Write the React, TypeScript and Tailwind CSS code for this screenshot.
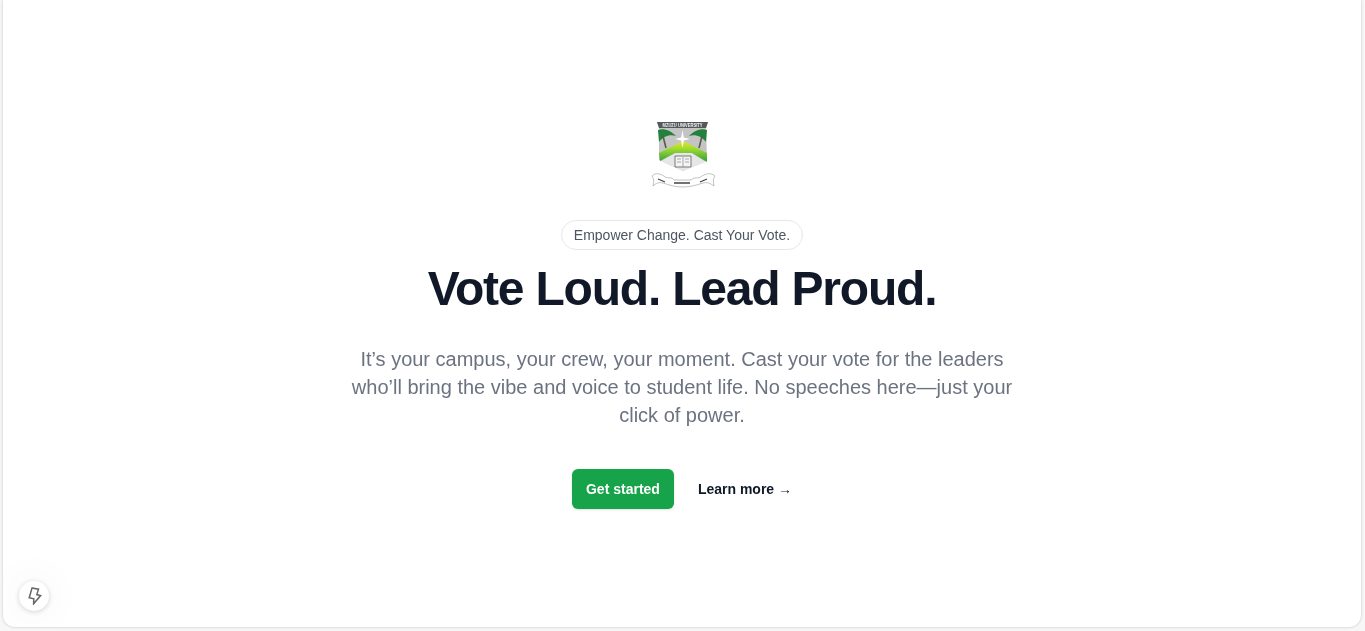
export default function App() {
  return (
    <div className="h-[631px] w-full overflow-hidden bg-[#f7f7f7] pl-[3px] pr-1 pb-1 font-['Liberation_Sans',Arial,sans-serif]">
      <div className="relative flex h-[627px] flex-col items-center overflow-hidden rounded-b-xl bg-white pt-[120px] shadow-[0_0_3px_rgba(0,0,0,0.22)] [will-change:transform]">
        <svg width="68" height="68" viewBox="0 0 68 68" className="ml-[2px]" role="img" aria-label="Mzuzu University crest">
          <defs>
            <linearGradient id="g" x1="0" y1="0" x2="0" y2="1">
              <stop offset="0" stopColor="#e4ea2e" />
              <stop offset="0.4" stopColor="#9ad82f" />
              <stop offset="1" stopColor="#2f9e3c" />
            </linearGradient>
            <filter id="b" x="-5%" y="-5%" width="110%" height="110%">
              <feGaussianBlur stdDeviation="0.4" />
            </filter>
          </defs>
          <g filter="url(#b)">
            <path d="M8 2H59L57 8L58 40L34 51L10 40L10 8Z" fill="#c4c4c4" />
            <path d="M12 41L26 33H43L57 42L34 51Z" fill="#e6e6e6" />
            <path d="M8 2H59L57 8H10Z" fill="#55595a" />
            <text x="33.5" y="7" fontSize="5" fontWeight="700" textAnchor="middle" fill="#f2f2f2" textLength="40" lengthAdjust="spacingAndGlyphs">MZUZU UNIVERSITY</text>
            <path d="M9 10C15 8 22 11 27 16C20 14 14 17 10 22Z" fill="#22823c" />
            <path d="M58 10C52 8 45 11 40 16C47 14 53 17 57 22Z" fill="#22823c" />
            <path d="M14 16L17 28M53 16L50 28" stroke="#5a5a4a" strokeWidth="1.6" />
            <path d="M34 21L58 33V42L43 33H26L11 41L10 33Z" fill="url(#g)" />
            <path d="M33.5 10L34.8 17.5L41 19L34.8 20.5L33.5 28L32.2 20.5L26 19L32.2 17.5Z" fill="#ffffff" />
            <path d="M26 36H42V47H26Z" fill="#f4f4f4" stroke="#5c5c5c" strokeWidth="0.8" />
            <path d="M34 37V47M28 39H32M28 42H32M36 39H40M36 42H40" stroke="#777" strokeWidth="0.6" />
            <path d="M3 56C7 52 11 54 15 56C17 58 20 58 23 58L25 60H42L45 58C48 58 51 58 53 56C57 54 61 52 66 56C64 59 64 61 65 66C61 63 58 62 54 63C48 65 41 67 34 67C26 67 20 65 14 63C10 62 7 63 4 66C5 61 5 59 3 56Z" fill="#ffffff" stroke="#999" strokeWidth="0.6" />
            <path d="M9 59L16 62M25 63H41M51 62L58 59" stroke="#444" strokeWidth="1.3" />
          </g>
        </svg>
        <div className="mt-8 flex h-[30px] items-center rounded-full border border-[#e5e7eb] px-3 text-sm text-[#4b5563]">
          Empower Change. Cast Your Vote.
        </div>
        <h1 className="mt-[9px] text-5xl leading-[60px] font-bold tracking-tight text-[#111827]">Vote Loud. Lead Proud.</h1>
        <p className="mt-[26px] w-[672px] text-center text-xl leading-7 text-[#6b7280]">
          It’s your campus, your crew, your moment. Cast your vote for the leaders who’ll bring the vibe and voice to student life. No speeches here—just your click of power.
        </p>
        <div className="mt-10 flex items-center gap-6">
          <button className="h-10 rounded-md bg-[#16a34a] px-3.5 text-sm font-semibold text-white shadow-sm">Get started</button>
          <a className="text-sm font-semibold text-[#111827]">Learn more <span>→</span></a>
        </div>
        <button className="absolute bottom-4 left-4 flex h-[30px] w-[30px] items-center justify-center rounded-full bg-white shadow-[0_1px_5px_rgba(0,0,0,0.16),0_0_40px_rgba(0,0,0,0.07)]">
          <svg width="16" height="18" viewBox="0 0 16 18" fill="none" stroke="#666" strokeWidth="1.5">
            <path d="M6 1L12.5 2.2L10.8 7.6L14.6 8.6L7.6 16.8L7.8 11.8L3.2 10.8Z" />
          </svg>
        </button>
      </div>
    </div>
  );
}
